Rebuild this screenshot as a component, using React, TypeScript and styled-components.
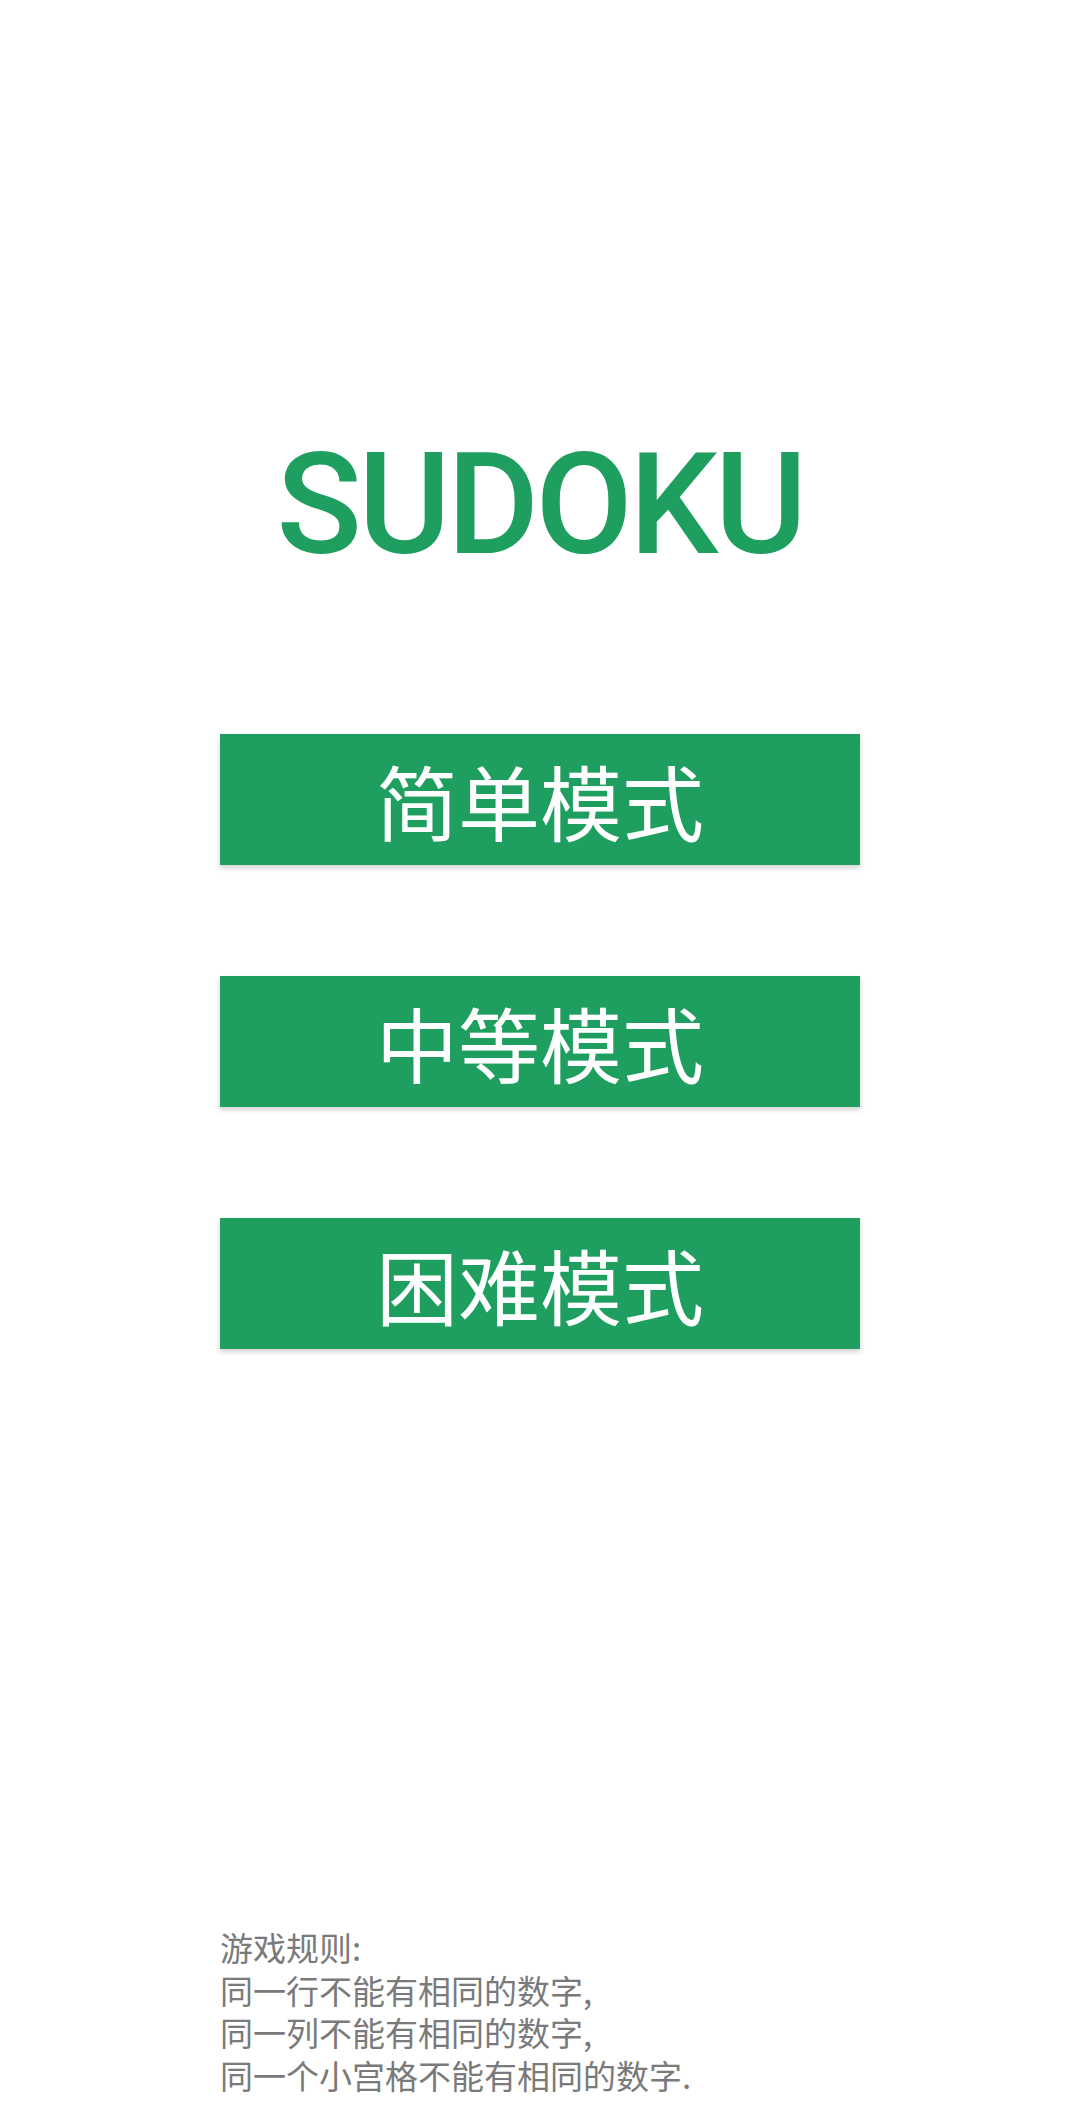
import React from "react";
import styled, { createGlobalStyle } from "styled-components";

const GlobalStyle = createGlobalStyle`
  html, body {
    margin: 0;
    padding: 0;
    background: #ffffff;
  }
  body {
    font-family: "Noto Sans CJK SC", "Noto Sans", sans-serif;
  }
`;

const Page = styled.div`
  min-height: 2117px;
  box-sizing: border-box;
  display: flex;
  flex-direction: column;
  align-items: center;
  padding-top: 434px;
  padding-bottom: 21px;
  background: #ffffff;
`;

const Title = styled.h1`
  margin: 0;
  font-family: Roboto, "Liberation Sans", sans-serif;
  font-weight: 500;
  font-size: 141px;
  line-height: 1;
  color: #1f9f5f;
  letter-spacing: -3.5px;
`;

const ButtonList = styled.div`
  display: flex;
  flex-direction: column;
  gap: 111px;
  margin-top: 159px;
`;

const ModeButton = styled.button`
  width: 640px;
  height: 131px;
  border: none;
  border-radius: 0;
  padding: 0;
  display: flex;
  align-items: center;
  justify-content: center;
  background: #1f9f5f;
  color: #ffffff;
  font-family: "Noto Sans CJK SC", sans-serif;
  font-size: 82px;
  font-weight: 400;
  line-height: 1;
  box-shadow: 0 3px 5px rgba(0, 0, 0, 0.18);
  cursor: pointer;
`;

const Rules = styled.div`
  margin-top: auto;
  width: 640px;
  font-family: "Noto Sans CJK SC", sans-serif;
  font-size: 33px;
  line-height: 42.5px;
  color: #7a7a7a;
`;

const RuleLine = styled.div`
  white-space: nowrap;
`;

const modes = ["简单模式", "中等模式", "困难模式"];
const rules = [
  "游戏规则:",
  "同一行不能有相同的数字,",
  "同一列不能有相同的数字,",
  "同一个小宫格不能有相同的数字.",
];

export default function App() {
  return (
    <>
      <GlobalStyle />
      <Page>
        <Title>SUDOKU</Title>
        <ButtonList>
          {modes.map((m) => (
            <ModeButton key={m}>{m}</ModeButton>
          ))}
        </ButtonList>
        <Rules>
          {rules.map((r) => (
            <RuleLine key={r}>{r}</RuleLine>
          ))}
        </Rules>
      </Page>
    </>
  );
}
